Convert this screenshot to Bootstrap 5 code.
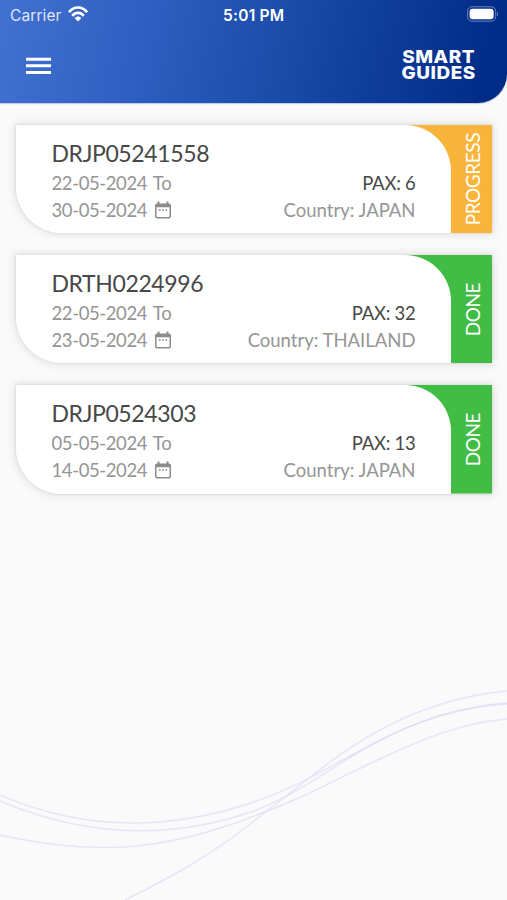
<!DOCTYPE html>
<html lang="en">
<head>
<meta charset="utf-8">
<meta name="viewport" content="width=device-width, initial-scale=1">
<title>Smart Guides</title>
<link href="https://cdn.jsdelivr.net/npm/bootstrap@5.3.0/dist/css/bootstrap.min.css" rel="stylesheet">
<style>
body{background:#fafafa;font-family:Lato,"Liberation Sans",sans-serif;height:900px;overflow:hidden}
.app-header{height:103px;border-bottom-right-radius:29px;background:linear-gradient(102deg,#4371d1 0%,#2f5fc1 28%,#184aa6 58%,#002b87 96%);color:#fff;box-shadow:0 1px 1px #7d98d580}
.status-bar{height:30px;font:400 15.5px/30px Inter,sans-serif;padding:0 8px 0 10px}
.status-bar svg{margin-top:-2px}
.carrier{color:#dfe8fb;letter-spacing:.1px;padding-top:1px;margin-right:6px}
.clock{font-weight:600;letter-spacing:.25px;left:223px;top:1px}
.title-bar{height:73px;padding:0 31px 2px 26px}
.brand{font:800 17.5px/16px Inter,sans-serif;transform:scaleX(1.08);transform-origin:right;letter-spacing:.5px;margin-top:-1px}
.trips{padding:22px 15px 0 16px;gap:22px}
.trip{height:108.2px;border-radius:0 0 0 46px;box-shadow:0 0 9px 1px rgba(60,70,60,.16),0 0 2px rgba(100,120,90,.22);background:linear-gradient(var(--state-color),var(--state-color)) right/90px 100% no-repeat}
.progress-trip{--state-color:#f9b43b}
.done-trip{--state-color:#41bd45}
.trip-body{background:#fff;border-radius:0 46px 0 46px;padding:12px 35.5px 0 35.5px;color:#959595;font-size:18.5px;line-height:27px}
.trip-code{font-size:23px;line-height:32px;color:#484848;white-space:nowrap;letter-spacing:-.38px;margin-bottom:1px}
.pax{color:#484848;letter-spacing:-.25px}
.day{letter-spacing:-.4px;word-spacing:2px}
.day svg{margin-top:-2px}
.state{width:41px;color:#fff;font-size:19px;line-height:41px;padding-left:1px}
.state span{writing-mode:vertical-rl;transform:rotate(180deg);white-space:nowrap;letter-spacing:-.45px}
.waves{left:0;top:670px;z-index:-1}
</style>
<script src="https://cdn.jsdelivr.net/npm/bootstrap@5.3.0/dist/js/bootstrap.bundle.min.js"></script>
</head>
<body>
<svg class="waves position-absolute" width="507" height="230" fill="none" stroke="#dcdaf8" stroke-width="1.5" stroke-opacity=".65">
<path d="M0 125C80 160 165 162 254 132C300 116 325 99 371 75C415 51 460 37 507 34"/>
<path d="M0 131C80 165 165 172 254 141C300 123 330 98 371 75C415 51 460 36 507 33"/>
<path d="M0 165C90 185 160 183 254 146C310 126 345 104 395 82C440 62 470 52 507 49"/>
<path d="M125 230C180 203 215 182 254 151Q280 131 304 112C345 79 410 30 507 21"/>
</svg>
<header class="app-header">
  <div class="status-bar d-flex align-items-center position-relative">
    <span class="carrier">Carrier</span>
    <svg width="20" height="16" viewBox="0 0 20 16" fill="none" stroke="#fff" stroke-width="2.7"><path d="M.9 6.2C6-.1 14-.1 19.1 6.2M4.2 9.8C7.5 5.9 12.5 5.9 15.8 9.8"/><path d="M6.7 12.3C8.6 10 11.4 10 13.3 12.3L10 15.6Z" fill="#fff" stroke="none"/></svg>
    <span class="clock position-absolute">5:01 PM</span>
    <svg class="ms-auto" width="32" height="16" viewBox="0 0 33 16"><rect x=".6" y=".6" width="29" height="14.8" rx="4.6" fill="none" stroke="#6f88c2"/><rect x="2.7" y="2.7" width="24.8" height="10.6" rx="3" fill="#fff"/><path d="M31 5.5q2 2.5 0 5z" fill="#8198cc"/></svg>
  </div>
  <div class="title-bar d-flex align-items-center justify-content-between">
    <svg width="25" height="18" viewBox="0 0 25 18" fill="#fff"><path d="M0 .7h25v3H0zM0 7.3h25v3H0zM0 14h25v3H0z"/></svg>
    <div class="brand text-center">SMART<br>GUIDES</div>
  </div>
</header>
<svg class="d-none"><symbol id="calendar" viewBox="0 0 16 18"><path fill="#8c8c8c" fill-rule="evenodd" d="M2.5.5h2v2h7v-2h2v2H14q2 0 2 2v11q0 2-2 2H2q-2 0-2-2v-11q0-2 2-2h.5zM1.5 6.3V15q0 1 1 1h11q1 0 1-1V6.3z"/><path fill="#8c8c8c" d="M3.8 8.2h1.8v1.6H3.8zM7.1 8.2h1.8v1.6H7.1zM10.4 8.2h1.8v1.6h-1.8z"/></symbol></svg>
<main class="trips d-flex flex-column">
  <article class="trip progress-trip d-flex">
    <div class="trip-body flex-grow-1">
      <div class="trip-code">DRJP05241558</div>
      <div class="d-flex justify-content-between"><span class="day">22-05-2024 To</span><span class="pax">PAX: 6</span></div>
      <div class="d-flex justify-content-between"><span class="day d-flex align-items-center gap-2">30-05-2024<svg width="16" height="18"><use href="#calendar"/></svg></span><span>Country: JAPAN</span></div>
    </div>
    <div class="state d-flex align-items-center justify-content-center"><span>PROGRESS</span></div>
  </article>
  <article class="trip done-trip d-flex">
    <div class="trip-body flex-grow-1">
      <div class="trip-code">DRTH0224996</div>
      <div class="d-flex justify-content-between"><span class="day">22-05-2024 To</span><span class="pax">PAX: 32</span></div>
      <div class="d-flex justify-content-between"><span class="day d-flex align-items-center gap-2">23-05-2024<svg width="16" height="18"><use href="#calendar"/></svg></span><span>Country: THAILAND</span></div>
    </div>
    <div class="state d-flex align-items-center justify-content-center"><span>DONE</span></div>
  </article>
  <article class="trip done-trip d-flex">
    <div class="trip-body flex-grow-1">
      <div class="trip-code">DRJP0524303</div>
      <div class="d-flex justify-content-between"><span class="day">05-05-2024 To</span><span class="pax">PAX: 13</span></div>
      <div class="d-flex justify-content-between"><span class="day d-flex align-items-center gap-2">14-05-2024<svg width="16" height="18"><use href="#calendar"/></svg></span><span>Country: JAPAN</span></div>
    </div>
    <div class="state d-flex align-items-center justify-content-center"><span>DONE</span></div>
  </article>
</main>
</body>
</html>
